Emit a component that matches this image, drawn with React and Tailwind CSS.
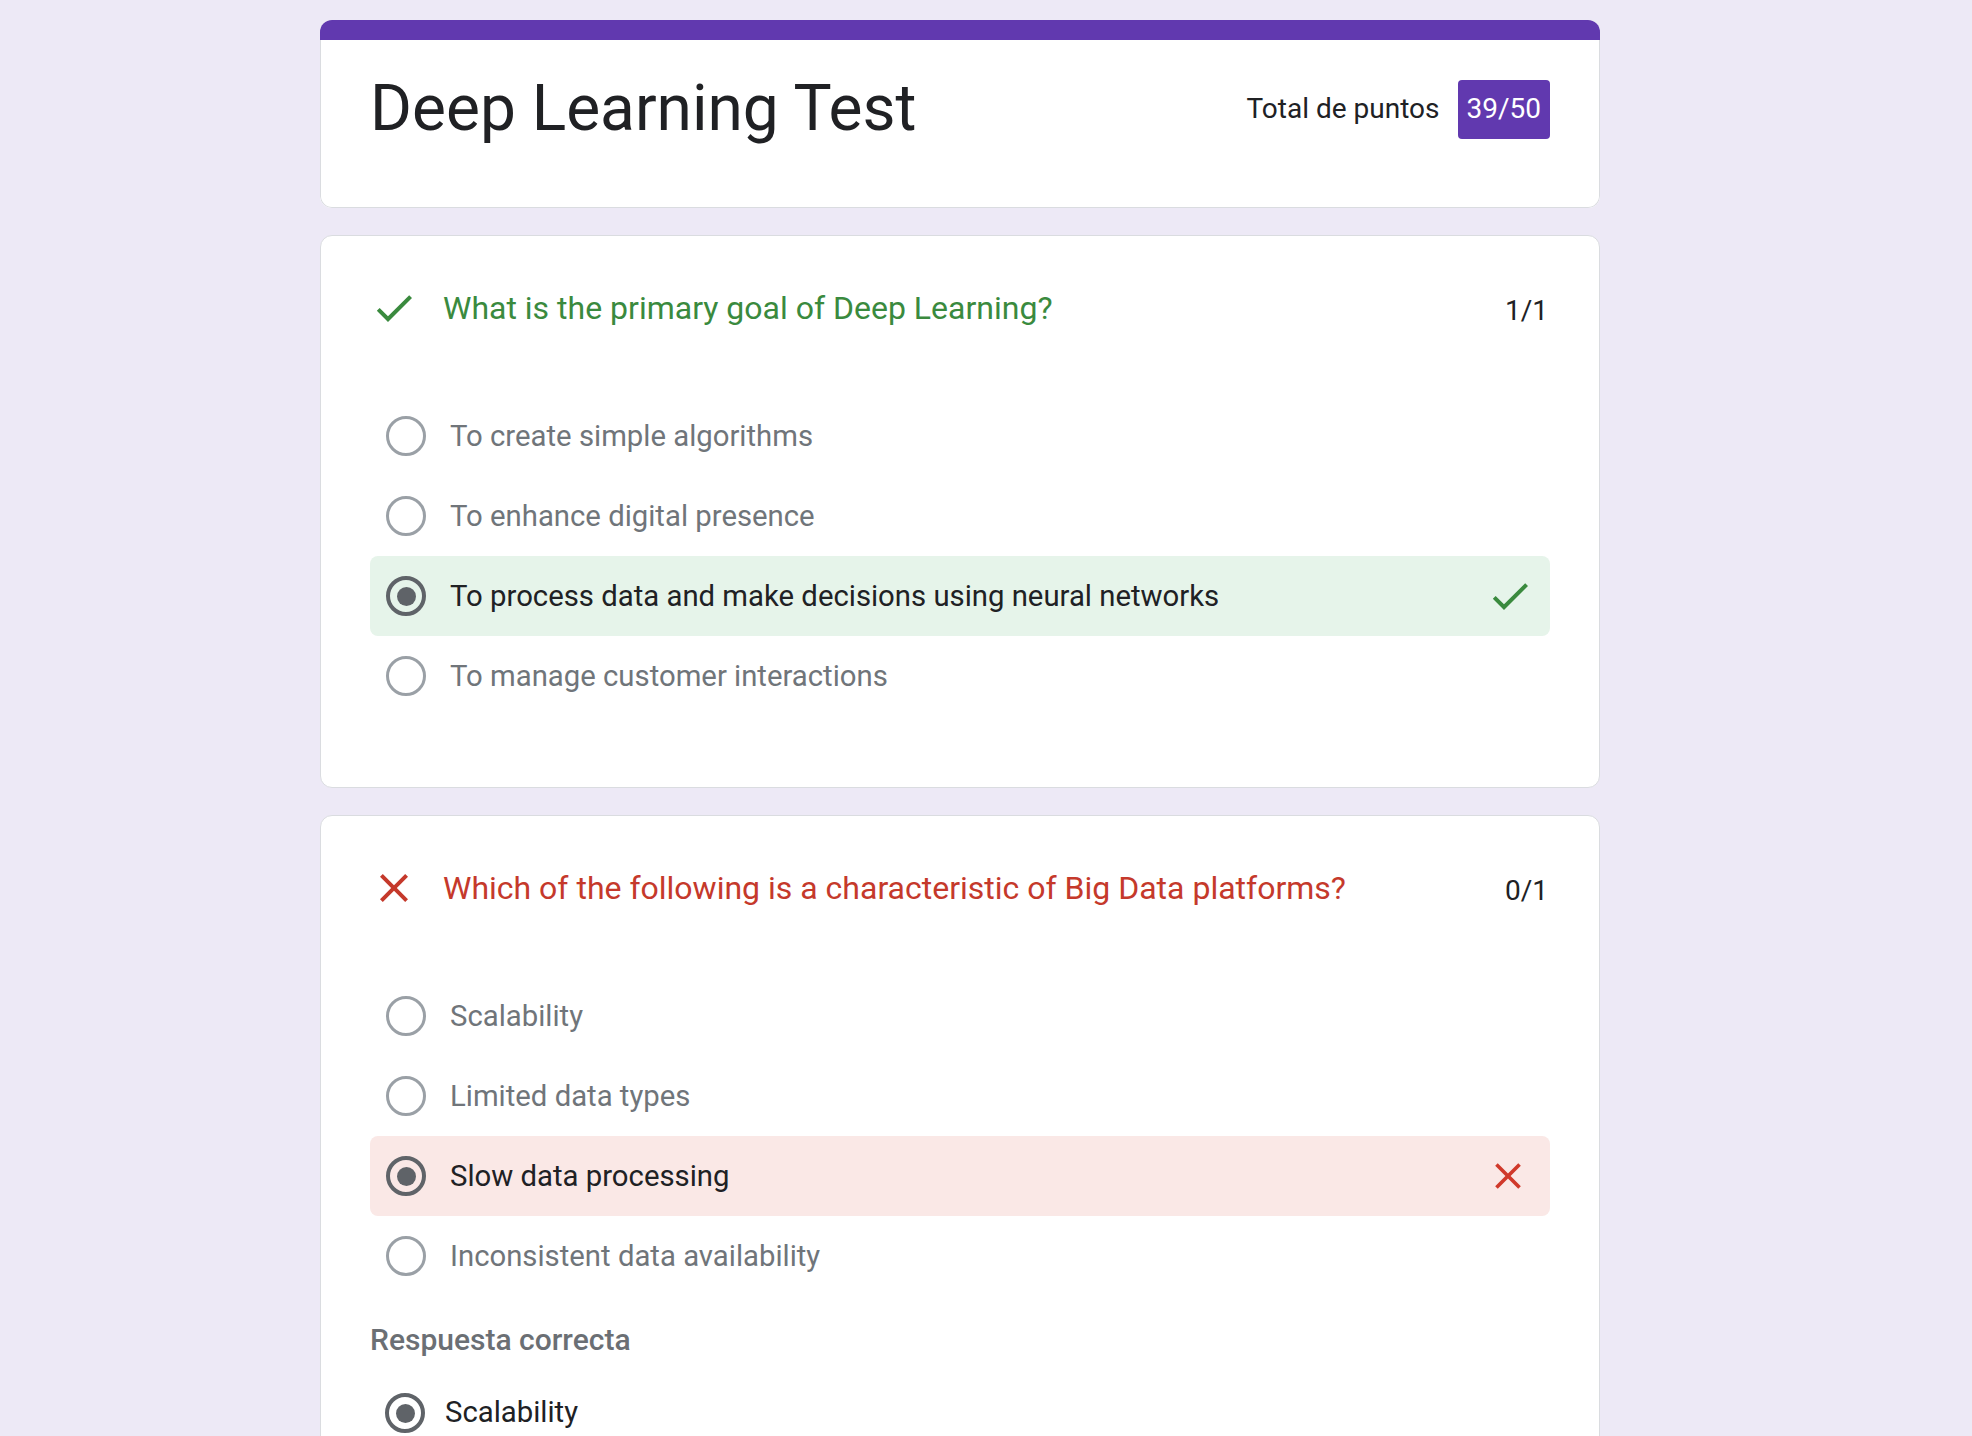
import React from "react";

const CheckIcon = ({ size = 48, color = "#3a8a3e" }) => (
  <svg width={size} height={size} viewBox="0 0 24 24" className="shrink-0">
    <path fill={color} d="M9 16.17L4.83 12l-1.42 1.41L9 19 21 7l-1.41-1.41z" />
  </svg>
);

const CloseIcon = ({ size = 48, color = "#c5392b" }) => (
  <svg width={size} height={size} viewBox="0 0 24 24" className="shrink-0">
    <path
      fill={color}
      d="M19 6.41L17.59 5 12 10.59 6.41 5 5 6.41 10.59 12 5 17.59 6.41 19 12 13.41 17.59 19 19 17.59 13.41 12z"
    />
  </svg>
);

const Radio = ({ selected }) =>
  selected ? (
    <div className="w-[40px] h-[40px] rounded-full border-[4px] border-[#5f6368] flex items-center justify-center shrink-0">
      <div className="w-[19px] h-[19px] rounded-full bg-[#5f6368]" />
    </div>
  ) : (
    <div className="w-[40px] h-[40px] rounded-full border-[3px] border-[#9aa0a6] shrink-0" />
  );

const Option = ({ text, selected, status }) => {
  const bg =
    status === "correct"
      ? "bg-[#e6f4ea]"
      : status === "wrong"
      ? "bg-[#fae8e6]"
      : "";
  return (
    <div
      className={`h-[80px] flex items-center pl-[16px] pr-[16px] rounded-[8px] ${bg}`}
    >
      <Radio selected={selected} />
      <span
        className={`ml-[24px] text-[29.3px] leading-[36px] flex-1 ${
          selected ? "text-[#202124]" : "text-[#70757a]"
        }`}
      >
        {text}
      </span>
      {status === "correct" && <CheckIcon size={48} color="#3a8a3e" />}
      {status === "wrong" && (
        <div className="w-[52px] flex justify-center">
          <CloseIcon size={44} color="#d0392b" />
        </div>
      )}
    </div>
  );
};

const QuestionCard = ({ correct, question, points, options, children }) => (
  <div className="bg-white rounded-[12px] border border-[#dadce0] px-[49px] pt-[52px] pb-[71px]">
    <div className="flex items-center justify-between h-[40px]">
      <div className="flex items-center gap-[25px]">
        {correct ? (
          <CheckIcon size={48} color="#3a8a3e" />
        ) : (
          <CloseIcon size={48} color="#c5392b" />
        )}
        <span
          className={`text-[32px] leading-[40px] ${
            correct ? "text-[#3a8a3e]" : "text-[#c5392b]"
          }`}
        >
          {question}
        </span>
      </div>
      <span className="mt-[5px] text-[28px] leading-[40px] text-[#202124] pr-[2px]">
        {points}
      </span>
    </div>
    <div className="mt-[68px] flex flex-col">
      {options.map((o, i) => (
        <Option key={i} {...o} />
      ))}
    </div>
    {children}
  </div>
);

export default function App() {
  return (
    <div
      className="min-h-screen bg-[#ede9f6] pt-[20px] pb-[40px]"
      style={{ fontFamily: "Roboto, 'Liberation Sans', sans-serif" }}
    >
      <div className="ml-[320px] w-[1280px] flex flex-col gap-[27px]">
        {/* Header card */}
        <div className="rounded-[12px] overflow-hidden bg-white">
          <div className="h-[20px] bg-[#6139af]" />
          <div className="border-x border-b border-[#dadce0] rounded-b-[12px] px-[49px] pt-[31px] pb-[60px] flex items-center justify-between">
            <h1 className="text-[64px] leading-[76px] text-[#202124] font-normal">
              Deep Learning Test
            </h1>
            <div className="flex items-center gap-[18px]">
              <span className="text-[28px] text-[#202124]">Total de puntos</span>
              <span className="h-[59px] px-[9px] rounded-[4px] bg-[#6139af] text-white text-[28px] flex items-center">
                39/50
              </span>
            </div>
          </div>
        </div>

        <QuestionCard
          correct
          question="What is the primary goal of Deep Learning?"
          points="1/1"
          options={[
            { text: "To create simple algorithms" },
            { text: "To enhance digital presence" },
            {
              text: "To process data and make decisions using neural networks",
              selected: true,
              status: "correct",
            },
            { text: "To manage customer interactions" },
          ]}
        />

        <QuestionCard
          correct={false}
          question="Which of the following is a characteristic of Big Data platforms?"
          points="0/1"
          options={[
            { text: "Scalability" },
            { text: "Limited data types" },
            { text: "Slow data processing", selected: true, status: "wrong" },
            { text: "Inconsistent data availability" },
          ]}
        >
          <div className="mt-[26px] text-[30px] leading-[36px] font-medium text-[#6b6f74]">
            Respuesta correcta
          </div>
          <div className="mt-[15px] h-[80px] flex items-center pl-[15px]">
            <Radio selected />
            <span className="ml-[20px] text-[29.3px] text-[#202124]">Scalability</span>
          </div>
        </QuestionCard>
      </div>
    </div>
  );
}
